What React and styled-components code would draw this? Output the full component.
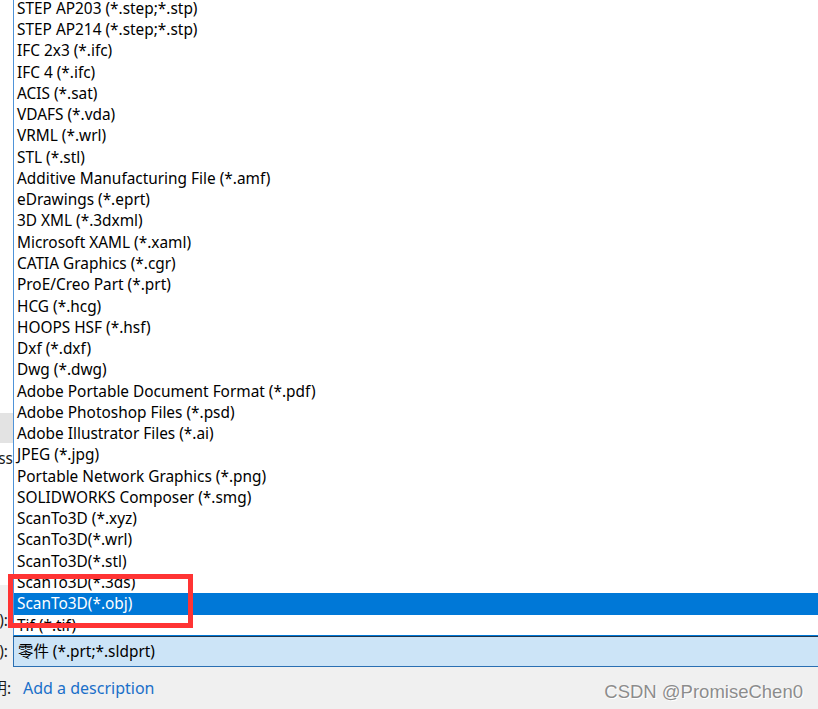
import React from 'react';
import styled, { createGlobalStyle } from 'styled-components';

const GlobalStyle = createGlobalStyle`
  html, body {
    margin: 0;
    padding: 0;
    background: #f0f0f0;
  }
`;

const formats = [
  'STEP AP203 (*.step;*.stp)',
  'STEP AP214 (*.step;*.stp)',
  'IFC 2x3 (*.ifc)',
  'IFC 4 (*.ifc)',
  'ACIS (*.sat)',
  'VDAFS (*.vda)',
  'VRML (*.wrl)',
  'STL (*.stl)',
  'Additive Manufacturing File (*.amf)',
  'eDrawings (*.eprt)',
  '3D XML (*.3dxml)',
  'Microsoft XAML (*.xaml)',
  'CATIA Graphics (*.cgr)',
  'ProE/Creo Part (*.prt)',
  'HCG (*.hcg)',
  'HOOPS HSF (*.hsf)',
  'Dxf (*.dxf)',
  'Dwg (*.dwg)',
  'Adobe Portable Document Format (*.pdf)',
  'Adobe Photoshop Files (*.psd)',
  'Adobe Illustrator Files (*.ai)',
  'JPEG (*.jpg)',
  'Portable Network Graphics (*.png)',
  'SOLIDWORKS Composer (*.smg)',
  'ScanTo3D (*.xyz)',
  'ScanTo3D(*.wrl)',
  'ScanTo3D(*.stl)',
  'ScanTo3D(*.3ds)',
  'ScanTo3D(*.obj)',
  'Tif (*.tif)',
];

const SELECTED = 'ScanTo3D(*.obj)';

const font = `"Noto Sans", "Noto Sans CJK SC", sans-serif`;

const Dialog = styled.div`
  position: relative;
  width: 818px;
  height: 709px;
  overflow: hidden;
  background: #f0f0f0;
  font-family: ${font};
  font-size: 15.4px;
  color: #000;
`;

const TopArea = styled.div`
  display: flex;
  height: 636px;
`;

const SideStrip = styled.div`
  width: 13px;
  display: flex;
  flex-direction: column;
`;

const SideBlock = styled.div`
  height: ${p => p.$h ? `${p.$h}px` : 'auto'};
  flex: ${p => p.$h ? 'none' : 1};
  background: ${p => p.$bg};
  padding-top: ${p => p.$pad || 0}px;
  box-sizing: border-box;
`;

const Label = styled.div`
  display: flex;
  justify-content: flex-end;
  overflow: hidden;
  white-space: nowrap;
  width: ${p => p.$w || 13}px;
  margin-right: ${p => p.$mr || 0}px;
  height: 21px;
  line-height: 21px;
  color: #1a1a1a;
  flex: none;
`;

const ListBox = styled.div`
  flex: 1;
  background: #fff;
  border-left: 1px solid #4f93d8;
  border-bottom: 1px solid #0078d7;
  overflow: hidden;
`;

const ListInner = styled.div`
  margin-top: -2.2px;
`;

const Item = styled.div`
  height: 21.28px;
  line-height: 21.28px;
  padding-left: 3px;
  white-space: nowrap;
  background: ${p => p.$selected ? '#0078d7' : 'transparent'};
  color: ${p => p.$selected ? '#fff' : '#000'};
`;

const ComboRow = styled.div`
  display: flex;
  align-items: center;
  height: 31px;
`;

const Combo = styled.div`
  flex: 1;
  height: 31px;
  box-sizing: border-box;
  background: #cce4f7;
  border: 1px solid #2a6fb3;
  border-top-color: #22374d;
  border-right: none;
  padding-left: 4px;
  line-height: 29px;
`;

const DescRow = styled.div`
  display: flex;
  align-items: center;
  height: 42px;
  gap: 12px;
`;

const Link = styled.span`
  color: #1a6fc9;
  font-size: 16px;
  cursor: pointer;
`;

const Highlight = styled.div`
  position: absolute;
  left: 8px;
  top: 574px;
  width: 185px;
  height: 54px;
  box-sizing: border-box;
  border: 5px solid #ff3434;
  pointer-events: none;
`;

const Watermark = styled.div`
  position: absolute;
  right: 15px;
  bottom: 6px;
  font-family: "Liberation Sans", Arial, sans-serif;
  font-size: 18.5px;
  color: #8c8c8c;
  text-shadow: 0 0 1px #fff, 1px 1px 0 #fff;
`;

export default function App() {
  return (
    <>
      <GlobalStyle />
      <Dialog>
        <TopArea>
          <SideStrip>
            <SideBlock $h={413} $bg="#fff" />
            <SideBlock $h={30} $bg="#e3e3e3" />
            <SideBlock $h={142} $bg="#fff" $pad={4.5}>
              <Label>Access</Label>
            </SideBlock>
            <SideBlock $bg="#f0f0f0" $pad={24.5}>
              <Label $w={8} $mr={5}>文件名(N):</Label>
            </SideBlock>
          </SideStrip>
          <ListBox>
            <ListInner>
              {formats.map(f => (
                <Item key={f} $selected={f === SELECTED}>{f}</Item>
              ))}
            </ListInner>
          </ListBox>
        </TopArea>
        <ComboRow>
          <Label $w={8} $mr={5}>保存类型(T):</Label>
          <Combo>零件 (*.prt;*.sldprt)</Combo>
        </ComboRow>
        <DescRow>
          <Label $w={11}>说明:</Label>
          <Link>Add a description</Link>
        </DescRow>
        <Highlight />
        <Watermark>CSDN @PromiseChen0</Watermark>
      </Dialog>
    </>
  );
}
